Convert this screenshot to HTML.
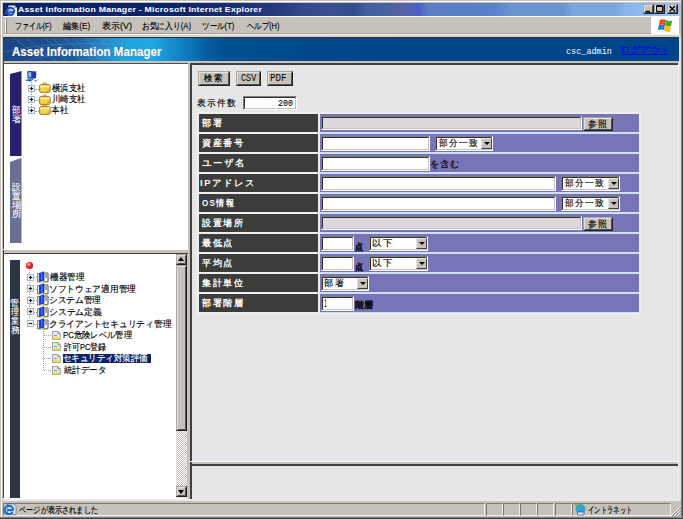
<!DOCTYPE html>
<html><head><meta charset="utf-8">
<style>
*{margin:0;padding:0;box-sizing:border-box}
html,body{width:683px;height:519px;overflow:hidden;background:#c6c2bb;font-family:"Liberation Sans",sans-serif;position:relative}
.a{position:absolute}
.t{position:absolute;white-space:nowrap;line-height:1}
.inp{position:absolute;background:#fff;border-top:1px solid #808080;border-left:1px solid #808080;border-bottom:1px solid #fff;border-right:1px solid #fff}
.inp:before{content:"";position:absolute;left:0;top:0;right:0;bottom:0;border-top:1px solid #303030;border-left:1px solid #303030;border-bottom:1px solid #c6c2bb;border-right:1px solid #c6c2bb}
.dis{background:#dcd8dc}
.btn{position:absolute;background:#c6c2bb;border-top:1px solid #a8a6a2;border-left:1px solid #a8a6a2;border-bottom:1px solid #202020;border-right:1px solid #202020}
.btn:before{content:"";position:absolute;left:0;top:0;right:0;bottom:0;border-top:1px solid #e4e2de;border-left:1px solid #e4e2de;border-bottom:1px solid #505050;border-right:1px solid #505050}
.dd{position:absolute;top:1px;bottom:1px;right:0px;width:11px;background:#c6c2bb;border-top:1px solid #e8e8e8;border-left:1px solid #e8e8e8;border-bottom:1px solid #404040;border-right:1px solid #404040}
.dd:after{content:"";position:absolute;left:1.5px;top:3px;border-left:3px solid transparent;border-right:3px solid transparent;border-top:3.5px solid #000}
.lbl{position:absolute;color:#fff;font-size:9px;font-weight:bold;letter-spacing:2px;white-space:nowrap;line-height:1}
.jt{font-size:9px;color:#000}
</style></head><body>

<div class="a" style="left:0;top:0;width:683px;height:1px;background:#c6c2bb"></div>
<div class="a" style="left:1px;top:1px;width:681px;height:1px;background:#fff"></div>
<div class="a" style="left:1px;top:1px;width:1px;height:517px;background:#fff"></div>
<div class="a" style="left:681px;top:0;width:1px;height:519px;background:#808080"></div>
<div class="a" style="left:682px;top:0;width:1px;height:519px;background:#404040"></div>
<div class="a" style="left:0;top:517px;width:683px;height:1px;background:#808080"></div>
<div class="a" style="left:0;top:518px;width:683px;height:1px;background:#404040"></div>
<div class="a" style="left:3px;top:3px;width:677px;height:13px;background:linear-gradient(90deg,#0a246a 0px,#0c2468 177px,#1a3072 230px,#223a7a 270px,#34488a 300px,#3a5090 330px,#304f8a 350px,#4060a0 365px,#4a62a0 385px,#5a62a0 400px,#4a60c8 416px,#5a7ec0 425px,#5a80c8 490px,#6a96d0 510px,#6a96d0 560px,#7aa6dc 570px,#7aa6dc 612px,#8ab4ea 622px,#a0c4f0 677px)"></div>
<svg class="a" style="left:2px;top:2px" width="16" height="15" viewBox="0 0 16 15">
<path d="M6.5 3.5 H12.8 L15 5.7 V14.5 H6.5z" fill="#f2f0ea"/>
<path d="M12.8 3.5 V5.7 H15" fill="#d0ccc0" stroke="#404040" stroke-width="0.5"/>
<path d="M5 9.5 A3.6 3.2 0 1 1 11.8 10.2 H7 M11.6 11.5 A3.6 3.2 0 0 1 5 9.5" fill="none" stroke="#1a4ad8" stroke-width="2"/>
<ellipse cx="8.8" cy="8" rx="1.6" ry="0.9" fill="#80c8f0"/>
<path d="M2.8 12.5 Q4.2 9 6 7.5" stroke="#8a6a28" stroke-width="0.9" fill="none"/>
</svg>
<div class="t" style="left:18.00px;top:6.00px;color:#fff;font-size:9px;font-weight:bold;letter-spacing:0.2px;transform:scale(0.9760,0.8889);transform-origin:0 0;">Asset Information Manager - Microsoft Internet Explorer</div>
<div class="btn" style="left:643px;top:4px;width:11px;height:10px"></div>
<div class="btn" style="left:654px;top:4px;width:11px;height:10px"></div>
<div class="btn" style="left:667px;top:4px;width:11px;height:10px"></div>
<svg class="a" style="left:643px;top:4px" width="36" height="10" viewBox="0 0 36 10">
<path d="M2.5 7.5 H7" stroke="#000" stroke-width="1.4"/>
<path d="M13.5 1.8 H19.5 V7.5 H13.5z" fill="none" stroke="#000" stroke-width="1"/>
<path d="M13.5 2 H19.5" stroke="#000" stroke-width="1.6"/>
<path d="M26.5 2 L32 7.5 M32 2 L26.5 7.5" stroke="#000" stroke-width="1.3"/>
</svg>
<div class="a" style="left:3px;top:16px;width:677px;height:1px;background:#fff"></div>
<div class="a" style="left:5px;top:19px;width:1px;height:14px;background:#fff"></div>
<div class="a" style="left:6px;top:19px;width:1px;height:14px;background:#808080"></div>
<div class="a" style="left:3px;top:33px;width:648px;height:1px;background:#a8a49c"></div>
<div class="a" style="left:3px;top:34px;width:677px;height:1px;background:#f4f2ee"></div>
<div class="t" style="left:15.23px;top:22.30px;color:#000;font-size:9px;-webkit-text-stroke:0.15px;transform:scale(0.7717,1.0000);transform-origin:0 0;"><span style="display:inline-block;width:9.000px;text-align:center">フ</span><span style="display:inline-block;width:9.000px;text-align:center">ァ</span><span style="display:inline-block;width:9.000px;text-align:center">イ</span><span style="display:inline-block;width:9.000px;text-align:center">ル</span>(F)</div>
<div class="t" style="left:63.40px;top:22.30px;color:#000;font-size:9px;-webkit-text-stroke:0.15px;transform:scale(0.9067,1.0000);transform-origin:0 0;"><span style="display:inline-block;width:9.000px;text-align:center">編</span><span style="display:inline-block;width:9.000px;text-align:center">集</span>(E)</div>
<div class="t" style="left:101.80px;top:22.30px;color:#000;font-size:9px;-webkit-text-stroke:0.15px;transform:scale(0.9966,1.0000);transform-origin:0 0;"><span style="display:inline-block;width:9.000px;text-align:center">表</span><span style="display:inline-block;width:9.000px;text-align:center">示</span>(V)</div>
<div class="t" style="left:141.94px;top:22.30px;color:#000;font-size:9px;-webkit-text-stroke:0.15px;transform:scale(0.8607,1.0000);transform-origin:0 0;"><span style="display:inline-block;width:9.000px;text-align:center">お</span><span style="display:inline-block;width:9.000px;text-align:center">気</span><span style="display:inline-block;width:9.000px;text-align:center">に</span><span style="display:inline-block;width:9.000px;text-align:center">入</span><span style="display:inline-block;width:9.000px;text-align:center">り</span>(A)</div>
<div class="t" style="left:202.16px;top:22.30px;color:#000;font-size:9px;-webkit-text-stroke:0.15px;transform:scale(0.8378,1.0000);transform-origin:0 0;"><span style="display:inline-block;width:9.000px;text-align:center">ツ</span><span style="display:inline-block;width:9.000px;text-align:center">ー</span><span style="display:inline-block;width:9.000px;text-align:center">ル</span>(T)</div>
<div class="t" style="left:246.60px;top:22.30px;color:#000;font-size:9px;-webkit-text-stroke:0.15px;transform:scale(0.8205,1.0000);transform-origin:0 0;"><span style="display:inline-block;width:9.000px;text-align:center">ヘ</span><span style="display:inline-block;width:9.000px;text-align:center">ル</span><span style="display:inline-block;width:9.000px;text-align:center">プ</span>(H)</div>
<div class="a" style="left:651px;top:17px;width:28px;height:17px;background:#fff"></div>
<svg class="a" style="left:657px;top:18px" width="16" height="15" viewBox="0 0 16 15">
<path d="M2.8 1.8 Q5.5 0.5 9 2 L8 7 Q5 5.8 1.8 7z" fill="#f05020"/>
<path d="M9 2 Q12 3.5 15.2 2.5 L14 8.3 Q11 9.3 8 7z" fill="#48a828"/>
<path d="M1.8 7 Q5 5.8 8 7 L7 12.3 Q4 11 0.8 12.2z" fill="#2a78d8"/>
<path d="M8 7 Q11 9.3 14 8.3 L13 13.8 Q10 14.8 7 12.3z" fill="#f8c018"/>
</svg>
<div class="a" style="left:3px;top:35px;width:677px;height:2px;background:#d8d4cc"></div>
<div class="a" style="left:3px;top:37px;width:677px;height:1px;background:#303030"></div>
<div class="a" style="left:3px;top:37px;width:1px;height:463px;background:#404040"></div>
<div class="a" style="left:679px;top:37px;width:2px;height:463px;background:#e4e2de"></div>
<div class="a" style="left:4px;top:38px;width:675px;height:22.5px;background:linear-gradient(90deg,#1a4686 0px,#1c4c8c 35px,#1e5c9c 70px,#2888c8 100px,#20a6e0 125px,#20a8e0 150px,#1890d0 165px,#0a70b4 190px,#045a9c 205px,#005090 220px,#004c8c 260px,#00468a 330px,#00448a 677px)"></div>
<svg class="a" style="left:4px;top:38px" width="180" height="23" viewBox="0 0 180 23">
<g stroke="#8ad0ff" stroke-width="0.6" fill="none" opacity="0.35">
<path d="M10 0 L40 23"/><path d="M22 0 L52 23"/><path d="M40 0 Q55 10 62 23"/>
<path d="M48 0 Q60 12 80 23"/><path d="M60 0 Q72 10 90 23"/><path d="M70 0 Q80 14 100 23"/>
<path d="M0 14 Q40 4 110 6"/><path d="M20 23 Q60 12 120 14"/>
<path d="M80 0 L110 23"/><path d="M95 0 L120 23"/>
</g>
</svg>
<div class="t" style="left:12.20px;top:45.94px;color:#fff;font-size:11.5px;font-weight:bold;-webkit-text-stroke:0.15px;transform:scale(1.0081,1.0600);transform-origin:0 0;text-shadow:0.6px 0.6px 0 rgba(0,0,40,0.45)">Asset Information Manager</div>
<div class="t" style="left:565.74px;top:46.70px;color:#fff;font-size:8px;font-family:'Liberation Mono',monospace;transform:scale(1.0619,1.2000);transform-origin:0 0;">csc_admin</div>
<div class="t" style="left:619.96px;top:45.85px;color:#0000ff;font-size:9px;-webkit-text-stroke:0.15px;transform:scale(1.1195,1.0000);transform-origin:0 0;"><span style="display:inline-block;width:9.000px;text-align:center">ロ</span><span style="display:inline-block;width:9.000px;text-align:center">グ</span><span style="display:inline-block;width:9.000px;text-align:center">ア</span><span style="display:inline-block;width:9.000px;text-align:center">ウ</span><span style="display:inline-block;width:9.000px;text-align:center">ト</span></div>
<div class="a" style="left:622px;top:54px;width:46px;height:1px;background:#0000ff"></div>
<div class="a" style="left:4px;top:60.5px;width:675px;height:1px;background:#f0eeea"></div>
<div class="a" style="left:4px;top:61px;width:675px;height:2px;background:#c6c2bb"></div>
<div class="a" style="left:4px;top:63px;width:184px;height:1px;background:#505050"></div>
<div class="a" style="left:4px;top:64px;width:184px;height:185px;background:#fff"></div>
<svg class="a" style="left:10px;top:70px" width="12" height="88" viewBox="0 0 12 88"><path d="M0 4 Q1 3.5 11.5 1 L11.5 86 L0 86 Z" fill="#2a2070"/></svg>
<div class="a" style="left:10px;top:157px;width:12px;height:1px;background:#fff"></div>
<svg class="a" style="left:10px;top:157px" width="12" height="87" viewBox="0 0 12 87"><path d="M0 5 Q1 4.5 11.5 1 L11.5 86 L0 86 Z" fill="#6a7090"/></svg>
<div class="t" style="left:11.50px;top:105.67px;color:#fff;font-size:8.5px;-webkit-text-stroke:0.1px;transform:scale(0.9444,1.0000);transform-origin:0 0;"><span style="display:inline-block;width:9.000px;text-align:center">部</span></div>
<div class="t" style="left:11.50px;top:115.02px;color:#fff;font-size:8.5px;-webkit-text-stroke:0.1px;transform:scale(1.0625,1.0000);transform-origin:0 0;"><span style="display:inline-block;width:9.000px;text-align:center">署</span></div>
<div class="t" style="left:11.50px;top:182.53px;color:#fff;font-size:8.5px;-webkit-text-stroke:0.1px;transform:scale(0.9444,1.0000);transform-origin:0 0;"><span style="display:inline-block;width:9.000px;text-align:center">設</span></div>
<div class="t" style="left:11.50px;top:191.78px;color:#fff;font-size:8.5px;-webkit-text-stroke:0.1px;transform:scale(0.9444,1.0000);transform-origin:0 0;"><span style="display:inline-block;width:9.000px;text-align:center">置</span></div>
<div class="t" style="left:11.50px;top:201.03px;color:#fff;font-size:8.5px;-webkit-text-stroke:0.1px;transform:scale(1.0625,1.0000);transform-origin:0 0;"><span style="display:inline-block;width:9.000px;text-align:center">場</span></div>
<div class="t" style="left:11.50px;top:210.28px;color:#fff;font-size:8.5px;-webkit-text-stroke:0.1px;transform:scale(1.0625,1.0000);transform-origin:0 0;"><span style="display:inline-block;width:9.000px;text-align:center">所</span></div>
<svg class="a" style="left:24px;top:70px" width="14" height="13" viewBox="0 0 14 13">
<path d="M3.2 1.2 Q7 0.6 12.3 1.5 L12 8.3 Q8 8.8 3.6 8.3z" fill="#1a3aa8"/>
<path d="M4.3 2.2 L7.3 2.3 L7.2 7.3 L4.6 7.2z" fill="#88c8f0"/>
<path d="M1 10.5 L5.5 8.2 L10 9 L6.5 11.5z" fill="#2050c0"/>
<path d="M2 10.2 L5.5 9 L8 9.5" stroke="#88b8f0" stroke-width="0.6" fill="none"/>
<path d="M10.5 11 L12.8 10.5" stroke="#3a60c0" stroke-width="1"/>
</svg>
<div class="a" style="left:31px;top:82px;width:1px;height:29px;border-left:1px dotted #a0a0a0"></div>
<div class="a" style="left:35px;top:88.5px;width:4px;height:1px;border-top:1px dotted #a0a0a0"></div>
<svg class="a" style="left:28px;top:85px" width="7" height="7" viewBox="0 0 7 7">
<rect x="0.5" y="0.5" width="6" height="6" fill="#f4f4f4" stroke="#98b0d0" stroke-width="0.9"/>
<path d="M1.8 3.5 H5.2" stroke="#101010" stroke-width="1.1"/><path d="M3.5 1.8 V5.2" stroke="#101010" stroke-width="1.1"/>
</svg>
<svg class="a" style="left:38.5px;top:82px" width="12" height="11" viewBox="0 0 12 11">
<path d="M3.5 3 Q3.5 0.8 5.8 0.8 Q8 0.8 8 3" fill="none" stroke="#b07820" stroke-width="1"/>
<rect x="0.6" y="2.6" width="10.6" height="7.8" rx="1.5" fill="#f8d040" stroke="#a06a18" stroke-width="0.9"/>
<path d="M1.3 3.4 H10.5 V5.5 H1.3z" fill="#fff0a0"/>
<path d="M8 8.5 L10.5 6.5 V9.5 H8z" fill="#f0a040"/>
</svg>
<div class="t" style="left:51.80px;top:84.45px;color:#000;font-size:8.5px;-webkit-text-stroke:0.15px;transform:scale(0.9417,1.0000);transform-origin:0 0;"><span style="display:inline-block;width:9.000px;text-align:center">横</span><span style="display:inline-block;width:9.000px;text-align:center">浜</span><span style="display:inline-block;width:9.000px;text-align:center">支</span><span style="display:inline-block;width:9.000px;text-align:center">社</span></div>
<div class="a" style="left:35px;top:99.5px;width:4px;height:1px;border-top:1px dotted #a0a0a0"></div>
<svg class="a" style="left:28px;top:96px" width="7" height="7" viewBox="0 0 7 7">
<rect x="0.5" y="0.5" width="6" height="6" fill="#f4f4f4" stroke="#98b0d0" stroke-width="0.9"/>
<path d="M1.8 3.5 H5.2" stroke="#101010" stroke-width="1.1"/><path d="M3.5 1.8 V5.2" stroke="#101010" stroke-width="1.1"/>
</svg>
<svg class="a" style="left:38.5px;top:94px" width="12" height="11" viewBox="0 0 12 11">
<path d="M3.5 3 Q3.5 0.8 5.8 0.8 Q8 0.8 8 3" fill="none" stroke="#b07820" stroke-width="1"/>
<rect x="0.6" y="2.6" width="10.6" height="7.8" rx="1.5" fill="#f8d040" stroke="#a06a18" stroke-width="0.9"/>
<path d="M1.3 3.4 H10.5 V5.5 H1.3z" fill="#fff0a0"/>
<path d="M8 8.5 L10.5 6.5 V9.5 H8z" fill="#f0a040"/>
</svg>
<div class="t" style="left:51.80px;top:95.45px;color:#000;font-size:8.5px;-webkit-text-stroke:0.15px;transform:scale(0.9417,1.0000);transform-origin:0 0;"><span style="display:inline-block;width:9.000px;text-align:center">川</span><span style="display:inline-block;width:9.000px;text-align:center">崎</span><span style="display:inline-block;width:9.000px;text-align:center">支</span><span style="display:inline-block;width:9.000px;text-align:center">社</span></div>
<div class="a" style="left:35px;top:110.5px;width:4px;height:1px;border-top:1px dotted #a0a0a0"></div>
<svg class="a" style="left:28px;top:107px" width="7" height="7" viewBox="0 0 7 7">
<rect x="0.5" y="0.5" width="6" height="6" fill="#f4f4f4" stroke="#98b0d0" stroke-width="0.9"/>
<path d="M1.8 3.5 H5.2" stroke="#101010" stroke-width="1.1"/><path d="M3.5 1.8 V5.2" stroke="#101010" stroke-width="1.1"/>
</svg>
<svg class="a" style="left:38.5px;top:104px" width="12" height="11" viewBox="0 0 12 11">
<path d="M3.5 3 Q3.5 0.8 5.8 0.8 Q8 0.8 8 3" fill="none" stroke="#b07820" stroke-width="1"/>
<rect x="0.6" y="2.6" width="10.6" height="7.8" rx="1.5" fill="#f8d040" stroke="#a06a18" stroke-width="0.9"/>
<path d="M1.3 3.4 H10.5 V5.5 H1.3z" fill="#fff0a0"/>
<path d="M8 8.5 L10.5 6.5 V9.5 H8z" fill="#f0a040"/>
</svg>
<div class="t" style="left:50.83px;top:106.45px;color:#000;font-size:8.5px;-webkit-text-stroke:0.15px;transform:scale(0.9706,1.0000);transform-origin:0 0;"><span style="display:inline-block;width:9.000px;text-align:center">本</span><span style="display:inline-block;width:9.000px;text-align:center">社</span></div>
<div class="a" style="left:3px;top:249px;width:186px;height:1px;background:#fff"></div>
<div class="a" style="left:3px;top:253px;width:186px;height:1px;background:#404040"></div>
<div class="a" style="left:3px;top:253px;width:1px;height:246px;background:#404040"></div>
<div class="a" style="left:4px;top:254px;width:172px;height:244px;background:#fff"></div>
<div class="a" style="left:10px;top:260px;width:10px;height:238px;background:#2c3648"></div>
<div class="t" style="left:10.30px;top:298.80px;color:#fff;font-size:8.5px;-webkit-text-stroke:0.1px;transform:scale(1.0000,1.0000);transform-origin:0 0;"><span style="display:inline-block;width:9.000px;text-align:center">管</span></div>
<div class="t" style="left:11.30px;top:308.00px;color:#fff;font-size:8.5px;-webkit-text-stroke:0.1px;transform:scale(0.8889,1.0000);transform-origin:0 0;"><span style="display:inline-block;width:9.000px;text-align:center">理</span></div>
<div class="t" style="left:11.30px;top:317.20px;color:#fff;font-size:8.5px;-webkit-text-stroke:0.1px;transform:scale(0.8889,1.0000);transform-origin:0 0;"><span style="display:inline-block;width:9.000px;text-align:center">業</span></div>
<div class="t" style="left:11.30px;top:326.40px;color:#fff;font-size:8.5px;-webkit-text-stroke:0.1px;transform:scale(1.0000,1.0000);transform-origin:0 0;"><span style="display:inline-block;width:9.000px;text-align:center">務</span></div>
<div class="a" style="left:176px;top:254px;width:11px;height:244px;background:repeating-conic-gradient(#c6c2bb 0 25%,#fff 0 50%) 0 0/2px 2px"></div>
<div class="btn" style="left:176px;top:254px;width:11px;height:11px"></div>
<div class="a" style="left:178px;top:257px;border-left:3.5px solid transparent;border-right:3.5px solid transparent;border-bottom:4px solid #000"></div>
<div class="btn" style="left:176px;top:265px;width:11px;height:166px"></div>
<div class="btn" style="left:176px;top:486px;width:11px;height:11px"></div>
<div class="a" style="left:178px;top:490px;border-left:3.5px solid transparent;border-right:3.5px solid transparent;border-top:4px solid #000"></div>
<div class="a" style="left:187px;top:254px;width:1px;height:245px;background:#c6c2bb"></div>
<div class="a" style="left:26.3px;top:262.3px;width:7.2px;height:6.8px;border-radius:50%;background:radial-gradient(circle at 40% 35%,#ffb0b0 0,#e02020 45%,#a01010 100%)"></div>
<div class="a" style="left:29px;top:270px;width:1px;height:53px;border-left:1px dotted #a0a0a0"></div>
<div class="a" style="left:33px;top:277.2px;width:4px;height:1px;border-top:1px dotted #a0a0a0"></div>
<svg class="a" style="left:26.5px;top:274px" width="7" height="7" viewBox="0 0 7 7">
<rect x="0.5" y="0.5" width="6" height="6" fill="#f4f4f4" stroke="#98b0d0" stroke-width="0.9"/>
<path d="M1.8 3.5 H5.2" stroke="#101010" stroke-width="1.1"/><path d="M3.5 1.8 V5.2" stroke="#101010" stroke-width="1.1"/>
</svg>
<svg class="a" style="left:37px;top:271px" width="12" height="12" viewBox="0 0 12 12">
<path d="M0.6 2.5 H2.5 V11 H0.6z" fill="#e8e8e8" stroke="#303030" stroke-width="0.6"/>
<path d="M7 2 H11 V10.6 H7z" fill="#fff" stroke="#202020" stroke-width="0.7"/>
<path d="M11 2.5 V10.5" stroke="#7080ff" stroke-width="0.8"/>
<path d="M8 4 H10 M8 6 H10" stroke="#202020" stroke-width="0.8"/>
<path d="M2.2 2 L7 0.3 V9.6 L2.2 11.2z" fill="#1038e8"/>
<path d="M4.8 1.8 V9" stroke="#58c8ff" stroke-width="0.7"/>
<path d="M2.8 11 H10.8" stroke="#b8a818" stroke-width="0.9"/>
</svg>
<div class="t" style="left:50.05px;top:273.20px;color:#000;font-size:8.5px;-webkit-text-stroke:0.15px;transform:scale(0.9542,1.0000);transform-origin:0 0;"><span style="display:inline-block;width:9.000px;text-align:center">機</span><span style="display:inline-block;width:9.000px;text-align:center">器</span><span style="display:inline-block;width:9.000px;text-align:center">管</span><span style="display:inline-block;width:9.000px;text-align:center">理</span></div>
<div class="a" style="left:33px;top:288.8px;width:4px;height:1px;border-top:1px dotted #a0a0a0"></div>
<svg class="a" style="left:26.5px;top:285px" width="7" height="7" viewBox="0 0 7 7">
<rect x="0.5" y="0.5" width="6" height="6" fill="#f4f4f4" stroke="#98b0d0" stroke-width="0.9"/>
<path d="M1.8 3.5 H5.2" stroke="#101010" stroke-width="1.1"/><path d="M3.5 1.8 V5.2" stroke="#101010" stroke-width="1.1"/>
</svg>
<svg class="a" style="left:37px;top:283px" width="12" height="12" viewBox="0 0 12 12">
<path d="M0.6 2.5 H2.5 V11 H0.6z" fill="#e8e8e8" stroke="#303030" stroke-width="0.6"/>
<path d="M7 2 H11 V10.6 H7z" fill="#fff" stroke="#202020" stroke-width="0.7"/>
<path d="M11 2.5 V10.5" stroke="#7080ff" stroke-width="0.8"/>
<path d="M8 4 H10 M8 6 H10" stroke="#202020" stroke-width="0.8"/>
<path d="M2.2 2 L7 0.3 V9.6 L2.2 11.2z" fill="#1038e8"/>
<path d="M4.8 1.8 V9" stroke="#58c8ff" stroke-width="0.7"/>
<path d="M2.8 11 H10.8" stroke="#b8a818" stroke-width="0.9"/>
</svg>
<div class="t" style="left:49.08px;top:284.80px;color:#000;font-size:8.5px;-webkit-text-stroke:0.15px;transform:scale(0.9657,1.0000);transform-origin:0 0;"><span style="display:inline-block;width:9.000px;text-align:center">ソ</span><span style="display:inline-block;width:9.000px;text-align:center">フ</span><span style="display:inline-block;width:9.000px;text-align:center">ト</span><span style="display:inline-block;width:9.000px;text-align:center">ウ</span><span style="display:inline-block;width:9.000px;text-align:center">ェ</span><span style="display:inline-block;width:9.000px;text-align:center">ア</span><span style="display:inline-block;width:9.000px;text-align:center">適</span><span style="display:inline-block;width:9.000px;text-align:center">用</span><span style="display:inline-block;width:9.000px;text-align:center">管</span><span style="display:inline-block;width:9.000px;text-align:center">理</span></div>
<div class="a" style="left:33px;top:300.4px;width:4px;height:1px;border-top:1px dotted #a0a0a0"></div>
<svg class="a" style="left:26.5px;top:297px" width="7" height="7" viewBox="0 0 7 7">
<rect x="0.5" y="0.5" width="6" height="6" fill="#f4f4f4" stroke="#98b0d0" stroke-width="0.9"/>
<path d="M1.8 3.5 H5.2" stroke="#101010" stroke-width="1.1"/><path d="M3.5 1.8 V5.2" stroke="#101010" stroke-width="1.1"/>
</svg>
<svg class="a" style="left:37px;top:294px" width="12" height="12" viewBox="0 0 12 12">
<path d="M0.6 2.5 H2.5 V11 H0.6z" fill="#e8e8e8" stroke="#303030" stroke-width="0.6"/>
<path d="M7 2 H11 V10.6 H7z" fill="#fff" stroke="#202020" stroke-width="0.7"/>
<path d="M11 2.5 V10.5" stroke="#7080ff" stroke-width="0.8"/>
<path d="M8 4 H10 M8 6 H10" stroke="#202020" stroke-width="0.8"/>
<path d="M2.2 2 L7 0.3 V9.6 L2.2 11.2z" fill="#1038e8"/>
<path d="M4.8 1.8 V9" stroke="#58c8ff" stroke-width="0.7"/>
<path d="M2.8 11 H10.8" stroke="#b8a818" stroke-width="0.9"/>
</svg>
<div class="t" style="left:49.08px;top:296.40px;color:#000;font-size:8.5px;-webkit-text-stroke:0.15px;transform:scale(0.9651,1.0000);transform-origin:0 0;"><span style="display:inline-block;width:9.000px;text-align:center">シ</span><span style="display:inline-block;width:9.000px;text-align:center">ス</span><span style="display:inline-block;width:9.000px;text-align:center">テ</span><span style="display:inline-block;width:9.000px;text-align:center">ム</span><span style="display:inline-block;width:9.000px;text-align:center">管</span><span style="display:inline-block;width:9.000px;text-align:center">理</span></div>
<div class="a" style="left:33px;top:312.0px;width:4px;height:1px;border-top:1px dotted #a0a0a0"></div>
<svg class="a" style="left:26.5px;top:308px" width="7" height="7" viewBox="0 0 7 7">
<rect x="0.5" y="0.5" width="6" height="6" fill="#f4f4f4" stroke="#98b0d0" stroke-width="0.9"/>
<path d="M1.8 3.5 H5.2" stroke="#101010" stroke-width="1.1"/><path d="M3.5 1.8 V5.2" stroke="#101010" stroke-width="1.1"/>
</svg>
<svg class="a" style="left:37px;top:306px" width="12" height="12" viewBox="0 0 12 12">
<path d="M0.6 2.5 H2.5 V11 H0.6z" fill="#e8e8e8" stroke="#303030" stroke-width="0.6"/>
<path d="M7 2 H11 V10.6 H7z" fill="#fff" stroke="#202020" stroke-width="0.7"/>
<path d="M11 2.5 V10.5" stroke="#7080ff" stroke-width="0.8"/>
<path d="M8 4 H10 M8 6 H10" stroke="#202020" stroke-width="0.8"/>
<path d="M2.2 2 L7 0.3 V9.6 L2.2 11.2z" fill="#1038e8"/>
<path d="M4.8 1.8 V9" stroke="#58c8ff" stroke-width="0.7"/>
<path d="M2.8 11 H10.8" stroke="#b8a818" stroke-width="0.9"/>
</svg>
<div class="t" style="left:49.07px;top:308.00px;color:#000;font-size:8.5px;-webkit-text-stroke:0.15px;transform:scale(0.9802,1.0000);transform-origin:0 0;"><span style="display:inline-block;width:9.000px;text-align:center">シ</span><span style="display:inline-block;width:9.000px;text-align:center">ス</span><span style="display:inline-block;width:9.000px;text-align:center">テ</span><span style="display:inline-block;width:9.000px;text-align:center">ム</span><span style="display:inline-block;width:9.000px;text-align:center">定</span><span style="display:inline-block;width:9.000px;text-align:center">義</span></div>
<div class="a" style="left:33px;top:323.6px;width:4px;height:1px;border-top:1px dotted #a0a0a0"></div>
<svg class="a" style="left:26.5px;top:320px" width="7" height="7" viewBox="0 0 7 7">
<rect x="0.5" y="0.5" width="6" height="6" fill="#f4f4f4" stroke="#98b0d0" stroke-width="0.9"/>
<path d="M1.8 3.5 H5.2" stroke="#101010" stroke-width="1.1"/>
</svg>
<svg class="a" style="left:37px;top:318px" width="12" height="12" viewBox="0 0 12 12">
<path d="M0.6 2.5 H2.5 V11 H0.6z" fill="#e8e8e8" stroke="#303030" stroke-width="0.6"/>
<path d="M7 2 H11 V10.6 H7z" fill="#fff" stroke="#202020" stroke-width="0.7"/>
<path d="M11 2.5 V10.5" stroke="#7080ff" stroke-width="0.8"/>
<path d="M8 4 H10 M8 6 H10" stroke="#202020" stroke-width="0.8"/>
<path d="M2.2 2 L7 0.3 V9.6 L2.2 11.2z" fill="#1038e8"/>
<path d="M4.8 1.8 V9" stroke="#58c8ff" stroke-width="0.7"/>
<path d="M2.8 11 H10.8" stroke="#b8a818" stroke-width="0.9"/>
</svg>
<div class="t" style="left:49.08px;top:319.60px;color:#000;font-size:8.5px;-webkit-text-stroke:0.15px;transform:scale(0.9708,1.0000);transform-origin:0 0;"><span style="display:inline-block;width:9.000px;text-align:center">ク</span><span style="display:inline-block;width:9.000px;text-align:center">ラ</span><span style="display:inline-block;width:9.000px;text-align:center">イ</span><span style="display:inline-block;width:9.000px;text-align:center">ア</span><span style="display:inline-block;width:9.000px;text-align:center">ン</span><span style="display:inline-block;width:9.000px;text-align:center">ト</span><span style="display:inline-block;width:9.000px;text-align:center">セ</span><span style="display:inline-block;width:9.000px;text-align:center">キ</span><span style="display:inline-block;width:9.000px;text-align:center">ュ</span><span style="display:inline-block;width:9.000px;text-align:center">リ</span><span style="display:inline-block;width:9.000px;text-align:center">テ</span><span style="display:inline-block;width:9.000px;text-align:center">ィ</span><span style="display:inline-block;width:9.000px;text-align:center">管</span><span style="display:inline-block;width:9.000px;text-align:center">理</span></div>
<div class="a" style="left:43px;top:329px;width:1px;height:41px;border-left:1px dotted #a0a0a0"></div>
<div class="a" style="left:44px;top:335.2px;width:7px;height:1px;border-top:1px dotted #a0a0a0"></div>
<svg class="a" style="left:52px;top:331px" width="9" height="9" viewBox="0 0 9 9">
<path d="M0.5 0.5 H6 L8.3 2.8 V8.5 H0.5z" fill="#dce8f0" stroke="#808080" stroke-width="0.7"/>
<path d="M6 0.5 V2.8 H8.3" fill="#c0c0c0" stroke="#606060" stroke-width="0.5"/>
<path d="M1 6 H8 V8.2 H1z" fill="#f0e040"/>
<path d="M2 4.5 H5" stroke="#606060" stroke-width="0.6"/>
</svg>
<div class="t" style="left:63.28px;top:331.20px;color:#000;font-size:8.5px;-webkit-text-stroke:0.15px;transform:scale(0.9203,1.0000);transform-origin:0 0;">PC<span style="display:inline-block;width:9.000px;text-align:center">危</span><span style="display:inline-block;width:9.000px;text-align:center">険</span><span style="display:inline-block;width:9.000px;text-align:center">レ</span><span style="display:inline-block;width:9.000px;text-align:center">ベ</span><span style="display:inline-block;width:9.000px;text-align:center">ル</span><span style="display:inline-block;width:9.000px;text-align:center">管</span><span style="display:inline-block;width:9.000px;text-align:center">理</span></div>
<div class="a" style="left:44px;top:346.8px;width:7px;height:1px;border-top:1px dotted #a0a0a0"></div>
<svg class="a" style="left:52px;top:342px" width="9" height="9" viewBox="0 0 9 9">
<path d="M0.5 0.5 H6 L8.3 2.8 V8.5 H0.5z" fill="#dce8f0" stroke="#808080" stroke-width="0.7"/>
<path d="M6 0.5 V2.8 H8.3" fill="#c0c0c0" stroke="#606060" stroke-width="0.5"/>
<path d="M1 6 H8 V8.2 H1z" fill="#f0e040"/>
<path d="M2 4.5 H5" stroke="#606060" stroke-width="0.6"/>
</svg>
<div class="t" style="left:64.20px;top:342.80px;color:#000;font-size:8.5px;-webkit-text-stroke:0.15px;transform:scale(0.8854,1.0000);transform-origin:0 0;"><span style="display:inline-block;width:9.000px;text-align:center">許</span><span style="display:inline-block;width:9.000px;text-align:center">可</span>PC<span style="display:inline-block;width:9.000px;text-align:center">登</span><span style="display:inline-block;width:9.000px;text-align:center">録</span></div>
<div class="a" style="left:44px;top:358.4px;width:7px;height:1px;border-top:1px dotted #a0a0a0"></div>
<svg class="a" style="left:52px;top:354px" width="9" height="9" viewBox="0 0 9 9">
<path d="M0.5 0.5 H6 L8.3 2.8 V8.5 H0.5z" fill="#dce8f0" stroke="#808080" stroke-width="0.7"/>
<path d="M6 0.5 V2.8 H8.3" fill="#c0c0c0" stroke="#606060" stroke-width="0.5"/>
<path d="M1 6 H8 V8.2 H1z" fill="#f0e040"/>
<path d="M2 4.5 H5" stroke="#606060" stroke-width="0.6"/>
</svg>
<div class="a" style="left:63px;top:353.6px;width:88px;height:9.5px;background:#0a246a"></div>
<div class="t" style="left:63.26px;top:354.40px;color:#fff;font-size:8.5px;-webkit-text-stroke:0.15px;transform:scale(0.9416,1.0000);transform-origin:0 0;"><span style="display:inline-block;width:9.000px;text-align:center">セ</span><span style="display:inline-block;width:9.000px;text-align:center">キ</span><span style="display:inline-block;width:9.000px;text-align:center">ュ</span><span style="display:inline-block;width:9.000px;text-align:center">リ</span><span style="display:inline-block;width:9.000px;text-align:center">テ</span><span style="display:inline-block;width:9.000px;text-align:center">ィ</span><span style="display:inline-block;width:9.000px;text-align:center">対</span><span style="display:inline-block;width:9.000px;text-align:center">策</span><span style="display:inline-block;width:9.000px;text-align:center">評</span><span style="display:inline-block;width:9.000px;text-align:center">価</span></div>
<div class="a" style="left:44px;top:370.0px;width:7px;height:1px;border-top:1px dotted #a0a0a0"></div>
<svg class="a" style="left:52px;top:366px" width="9" height="9" viewBox="0 0 9 9">
<path d="M0.5 0.5 H6 L8.3 2.8 V8.5 H0.5z" fill="#dce8f0" stroke="#808080" stroke-width="0.7"/>
<path d="M6 0.5 V2.8 H8.3" fill="#c0c0c0" stroke="#606060" stroke-width="0.5"/>
<path d="M1 6 H8 V8.2 H1z" fill="#f0e040"/>
<path d="M2 4.5 H5" stroke="#606060" stroke-width="0.6"/>
</svg>
<div class="t" style="left:64.20px;top:366.00px;color:#000;font-size:8.5px;-webkit-text-stroke:0.15px;transform:scale(0.9432,1.0000);transform-origin:0 0;"><span style="display:inline-block;width:9.000px;text-align:center">統</span><span style="display:inline-block;width:9.000px;text-align:center">計</span><span style="display:inline-block;width:9.000px;text-align:center">デ</span><span style="display:inline-block;width:9.000px;text-align:center">ー</span><span style="display:inline-block;width:9.000px;text-align:center">タ</span></div>
<div class="a" style="left:3px;top:498px;width:186px;height:1px;background:#fff"></div>
<div class="a" style="left:188px;top:63px;width:2px;height:437px;background:#c6c2bb"></div>
<div class="a" style="left:190px;top:63px;width:2px;height:436px;background:#404040"></div>
<div class="a" style="left:190px;top:63px;width:488px;height:2px;background:#404040"></div>
<div class="a" style="left:192px;top:65px;width:486px;height:396px;background:#e6e6e6"></div>
<div class="a" style="left:190px;top:461px;width:488px;height:1px;background:#fff"></div>
<div class="a" style="left:190px;top:464px;width:488px;height:2px;background:#404040"></div>
<div class="a" style="left:192px;top:466px;width:486px;height:33px;background:#e6e6e6"></div>
<div class="a" style="left:678px;top:63px;width:1px;height:436px;background:#f0f0f0"></div>
<div class="a" style="left:190px;top:499px;width:490px;height:1px;background:#fff"></div>
<div class="btn" style="left:198px;top:71px;width:32px;height:15px"></div>
<div class="t" style="left:203.70px;top:73.65px;color:#000;font-size:9px;letter-spacing:2px;-webkit-text-stroke:0.2px;transform:scale(0.9250,1.0000);transform-origin:0 0;"><span style="display:inline-block;width:11.000px;text-align:center">検</span><span style="display:inline-block;width:11.000px;text-align:center">索</span></div>
<div class="btn" style="left:236px;top:71px;width:25px;height:15px"></div>
<div class="t" style="left:240.60px;top:73.70px;color:#000;font-size:9px;font-family:'Liberation Mono',monospace;;transform:scale(0.9437,1.1833);transform-origin:0 0;">CSV</div>
<div class="btn" style="left:267px;top:71px;width:26px;height:15px"></div>
<div class="t" style="left:270.28px;top:73.70px;color:#000;font-size:9px;font-family:'Liberation Mono',monospace;;transform:scale(1.0200,1.1833);transform-origin:0 0;">PDF</div>
<div class="t" style="left:197.03px;top:99.45px;color:#000;font-size:9px;letter-spacing:1.5px;-webkit-text-stroke:0.15px;transform:scale(0.9675,1.0000);transform-origin:0 0;"><span style="display:inline-block;width:10.500px;text-align:center">表</span><span style="display:inline-block;width:10.500px;text-align:center">示</span><span style="display:inline-block;width:10.500px;text-align:center">件</span><span style="display:inline-block;width:10.500px;text-align:center">数</span></div>
<div class="inp" style="left:243px;top:96px;width:54px;height:14px"></div>
<div class="t" style="left:278.43px;top:99.80px;color:#000;font-size:8.5px;font-family:'Liberation Mono',monospace;-webkit-text-stroke:0.1px;transform:scale(0.9714,1.0000);transform-origin:0 0;">200</div>
<div class="a" style="left:197px;top:112px;width:444px;height:203px;background:#eeeeee"></div>
<div class="a" style="left:320px;top:114px;width:319px;height:199px;background:#d0e0f4"></div>
<div class="a" style="left:199px;top:114px;width:119px;height:18px;background:#3c3c3a"></div>
<div class="a" style="left:320px;top:114px;width:319px;height:18px;background:#7874b8"></div>
<div class="t" style="left:201.50px;top:119.30px;color:#fff;font-size:9px;font-weight:bold;letter-spacing:1.5px;transform:scale(1.0250,1.0000);transform-origin:0 0;"><span style="display:inline-block;width:10.500px;text-align:center">部</span><span style="display:inline-block;width:10.500px;text-align:center">署</span></div>
<div class="a" style="left:199px;top:134px;width:119px;height:18px;background:#3c3c3a"></div>
<div class="a" style="left:320px;top:134px;width:319px;height:18px;background:#7874b8"></div>
<div class="t" style="left:201.50px;top:139.30px;color:#fff;font-size:9px;font-weight:bold;letter-spacing:1.5px;transform:scale(1.0171,1.0000);transform-origin:0 0;"><span style="display:inline-block;width:10.500px;text-align:center">資</span><span style="display:inline-block;width:10.500px;text-align:center">産</span><span style="display:inline-block;width:10.500px;text-align:center">番</span><span style="display:inline-block;width:10.500px;text-align:center">号</span></div>
<div class="a" style="left:199px;top:154px;width:119px;height:18px;background:#3c3c3a"></div>
<div class="a" style="left:320px;top:154px;width:319px;height:18px;background:#7874b8"></div>
<div class="t" style="left:201.50px;top:159.30px;color:#fff;font-size:9px;font-weight:bold;letter-spacing:1.5px;transform:scale(1.0375,1.0000);transform-origin:0 0;"><span style="display:inline-block;width:10.500px;text-align:center">ユ</span><span style="display:inline-block;width:10.500px;text-align:center">ー</span><span style="display:inline-block;width:10.500px;text-align:center">ザ</span><span style="display:inline-block;width:10.500px;text-align:center">名</span></div>
<div class="a" style="left:199px;top:174px;width:119px;height:18px;background:#3c3c3a"></div>
<div class="a" style="left:320px;top:174px;width:319px;height:18px;background:#7874b8"></div>
<div class="t" style="left:200.45px;top:179.30px;color:#fff;font-size:9px;font-weight:bold;letter-spacing:1.5px;transform:scale(1.0460,1.0000);transform-origin:0 0;">IP<span style="display:inline-block;width:10.500px;text-align:center">ア</span><span style="display:inline-block;width:10.500px;text-align:center">ド</span><span style="display:inline-block;width:10.500px;text-align:center">レ</span><span style="display:inline-block;width:10.500px;text-align:center">ス</span></div>
<div class="a" style="left:199px;top:194px;width:119px;height:18px;background:#3c3c3a"></div>
<div class="a" style="left:320px;top:194px;width:319px;height:18px;background:#7874b8"></div>
<div class="t" style="left:201.50px;top:199.30px;color:#fff;font-size:9px;font-weight:bold;letter-spacing:1.5px;transform:scale(0.8917,1.0000);transform-origin:0 0;">OS<span style="display:inline-block;width:10.500px;text-align:center">情</span><span style="display:inline-block;width:10.500px;text-align:center">報</span></div>
<div class="a" style="left:199px;top:214px;width:119px;height:18px;background:#3c3c3a"></div>
<div class="a" style="left:320px;top:214px;width:319px;height:18px;background:#7874b8"></div>
<div class="t" style="left:201.50px;top:219.30px;color:#fff;font-size:9px;font-weight:bold;letter-spacing:1.5px;transform:scale(1.0024,1.0000);transform-origin:0 0;"><span style="display:inline-block;width:10.500px;text-align:center">設</span><span style="display:inline-block;width:10.500px;text-align:center">置</span><span style="display:inline-block;width:10.500px;text-align:center">場</span><span style="display:inline-block;width:10.500px;text-align:center">所</span></div>
<div class="a" style="left:199px;top:234px;width:119px;height:18px;background:#3c3c3a"></div>
<div class="a" style="left:320px;top:234px;width:319px;height:18px;background:#7874b8"></div>
<div class="t" style="left:201.50px;top:239.30px;color:#fff;font-size:9px;font-weight:bold;letter-spacing:1.5px;transform:scale(1.0167,1.0000);transform-origin:0 0;"><span style="display:inline-block;width:10.500px;text-align:center">最</span><span style="display:inline-block;width:10.500px;text-align:center">低</span><span style="display:inline-block;width:10.500px;text-align:center">点</span></div>
<div class="a" style="left:199px;top:254px;width:119px;height:18px;background:#3c3c3a"></div>
<div class="a" style="left:320px;top:254px;width:319px;height:18px;background:#7874b8"></div>
<div class="t" style="left:201.50px;top:259.30px;color:#fff;font-size:9px;font-weight:bold;letter-spacing:1.5px;transform:scale(1.0167,1.0000);transform-origin:0 0;"><span style="display:inline-block;width:10.500px;text-align:center">平</span><span style="display:inline-block;width:10.500px;text-align:center">均</span><span style="display:inline-block;width:10.500px;text-align:center">点</span></div>
<div class="a" style="left:199px;top:274px;width:119px;height:18px;background:#3c3c3a"></div>
<div class="a" style="left:320px;top:274px;width:319px;height:18px;background:#7874b8"></div>
<div class="t" style="left:201.50px;top:279.30px;color:#fff;font-size:9px;font-weight:bold;letter-spacing:1.5px;transform:scale(1.0122,1.0000);transform-origin:0 0;"><span style="display:inline-block;width:10.500px;text-align:center">集</span><span style="display:inline-block;width:10.500px;text-align:center">計</span><span style="display:inline-block;width:10.500px;text-align:center">単</span><span style="display:inline-block;width:10.500px;text-align:center">位</span></div>
<div class="a" style="left:199px;top:294px;width:119px;height:18px;background:#3c3c3a"></div>
<div class="a" style="left:320px;top:294px;width:319px;height:18px;background:#7874b8"></div>
<div class="t" style="left:201.50px;top:299.30px;color:#fff;font-size:9px;font-weight:bold;letter-spacing:1.5px;transform:scale(1.0122,1.0000);transform-origin:0 0;"><span style="display:inline-block;width:10.500px;text-align:center">部</span><span style="display:inline-block;width:10.500px;text-align:center">署</span><span style="display:inline-block;width:10.500px;text-align:center">階</span><span style="display:inline-block;width:10.500px;text-align:center">層</span></div>
<div class="inp dis" style="left:321px;top:116px;width:261px;height:14px"></div>
<div class="btn" style="left:583px;top:116.5px;width:30px;height:14px"></div>
<div class="t" style="left:588.10px;top:119.70px;color:#000;font-size:8.5px;letter-spacing:1px;-webkit-text-stroke:0.15px;transform:scale(0.9842,1.0000);transform-origin:0 0;"><span style="display:inline-block;width:10.000px;text-align:center">参</span><span style="display:inline-block;width:10.000px;text-align:center">照</span></div>
<div class="inp" style="left:321px;top:136px;width:109px;height:14.5px"></div>
<div class="inp" style="left:435px;top:136px;width:58px;height:14.5px"><div class="dd"></div></div>
<div class="t" style="left:438.70px;top:139.20px;color:#000;font-size:8.5px;letter-spacing:1.5px;-webkit-text-stroke:0.15px;transform:scale(0.9585,1.0000);transform-origin:0 0;"><span style="display:inline-block;width:10.500px;text-align:center">部</span><span style="display:inline-block;width:10.500px;text-align:center">分</span><span style="display:inline-block;width:10.500px;text-align:center">一</span><span style="display:inline-block;width:10.500px;text-align:center">致</span></div>
<div class="inp" style="left:321px;top:156px;width:109px;height:14.5px"></div>
<div class="t" style="left:429.78px;top:160.10px;color:#000;font-size:8.5px;letter-spacing:1px;-webkit-text-stroke:0.15px;transform:scale(1.0179,1.0000);transform-origin:0 0;"><span style="display:inline-block;width:10.000px;text-align:center">を</span><span style="display:inline-block;width:10.000px;text-align:center">含</span><span style="display:inline-block;width:10.000px;text-align:center">む</span></div>
<div class="inp" style="left:321px;top:176px;width:235px;height:14.5px"></div>
<div class="inp" style="left:561px;top:176px;width:59px;height:14.5px"><div class="dd"></div></div>
<div class="t" style="left:564.70px;top:179.20px;color:#000;font-size:8.5px;letter-spacing:1.5px;-webkit-text-stroke:0.15px;transform:scale(0.9585,1.0000);transform-origin:0 0;"><span style="display:inline-block;width:10.500px;text-align:center">部</span><span style="display:inline-block;width:10.500px;text-align:center">分</span><span style="display:inline-block;width:10.500px;text-align:center">一</span><span style="display:inline-block;width:10.500px;text-align:center">致</span></div>
<div class="inp" style="left:321px;top:196px;width:235px;height:14.5px"></div>
<div class="inp" style="left:561px;top:196px;width:59px;height:14.5px"><div class="dd"></div></div>
<div class="t" style="left:564.70px;top:199.20px;color:#000;font-size:8.5px;letter-spacing:1.5px;-webkit-text-stroke:0.15px;transform:scale(0.9585,1.0000);transform-origin:0 0;"><span style="display:inline-block;width:10.500px;text-align:center">部</span><span style="display:inline-block;width:10.500px;text-align:center">分</span><span style="display:inline-block;width:10.500px;text-align:center">一</span><span style="display:inline-block;width:10.500px;text-align:center">致</span></div>
<div class="inp dis" style="left:321px;top:216px;width:261px;height:14px"></div>
<div class="btn" style="left:583px;top:216.5px;width:30px;height:14px"></div>
<div class="t" style="left:588.10px;top:219.70px;color:#000;font-size:8.5px;letter-spacing:1px;-webkit-text-stroke:0.15px;transform:scale(0.9842,1.0000);transform-origin:0 0;"><span style="display:inline-block;width:10.000px;text-align:center">参</span><span style="display:inline-block;width:10.000px;text-align:center">照</span></div>
<div class="inp" style="left:321px;top:236px;width:33px;height:14.5px"></div>
<div class="t" style="left:355.40px;top:242.50px;color:#101020;font-size:8.5px;font-weight:bold;-webkit-text-stroke:0.15px;transform:scale(0.9000,1.0000);transform-origin:0 0;"><span style="display:inline-block;width:9.000px;text-align:center">点</span></div>
<div class="inp" style="left:369px;top:236px;width:59px;height:14.5px"><div class="dd"></div></div>
<div class="t" style="left:371.66px;top:239.20px;color:#000;font-size:8.5px;letter-spacing:1.5px;-webkit-text-stroke:0.15px;transform:scale(1.0368,1.0000);transform-origin:0 0;"><span style="display:inline-block;width:10.500px;text-align:center">以</span><span style="display:inline-block;width:10.500px;text-align:center">下</span></div>
<div class="inp" style="left:321px;top:256px;width:33px;height:14.5px"></div>
<div class="t" style="left:355.40px;top:262.50px;color:#101020;font-size:8.5px;font-weight:bold;-webkit-text-stroke:0.15px;transform:scale(0.9000,1.0000);transform-origin:0 0;"><span style="display:inline-block;width:9.000px;text-align:center">点</span></div>
<div class="inp" style="left:369px;top:256px;width:59px;height:14.5px"><div class="dd"></div></div>
<div class="t" style="left:371.66px;top:259.20px;color:#000;font-size:8.5px;letter-spacing:1.5px;-webkit-text-stroke:0.15px;transform:scale(1.0368,1.0000);transform-origin:0 0;"><span style="display:inline-block;width:10.500px;text-align:center">以</span><span style="display:inline-block;width:10.500px;text-align:center">下</span></div>
<div class="inp" style="left:320.5px;top:276px;width:48.5px;height:14.5px"><div class="dd"></div></div>
<div class="t" style="left:324.20px;top:279.20px;color:#000;font-size:8.5px;letter-spacing:1.5px;-webkit-text-stroke:0.15px;transform:scale(1.0158,1.0000);transform-origin:0 0;"><span style="display:inline-block;width:10.500px;text-align:center">部</span><span style="display:inline-block;width:10.500px;text-align:center">署</span></div>
<div class="inp" style="left:321px;top:296px;width:33px;height:14.5px"></div>
<div class="t" style="left:323.93px;top:297.72px;color:#000;font-size:9px;transform:scale(0.5750,1.2833);transform-origin:0 0;">1</div>
<div class="t" style="left:355.40px;top:300.70px;color:#101020;font-size:8.5px;font-weight:bold;-webkit-text-stroke:0.15px;transform:scale(0.9889,1.0000);transform-origin:0 0;"><span style="display:inline-block;width:9.000px;text-align:center">階</span><span style="display:inline-block;width:9.000px;text-align:center">層</span></div>
<div class="a" style="left:2px;top:500px;width:679px;height:17px;background:#c6c2bb"></div>
<div class="a" style="left:3px;top:499px;width:677px;height:1.5px;background:#eceae6"></div>
<div class="a" style="left:3px;top:503px;width:482px;height:13px;border-top:1px solid #7a7874;border-left:1px solid #7a7874;border-bottom:1px solid #f0eee8;border-right:1px solid #f0eee8"></div>
<div class="a" style="left:486px;top:503px;width:16.5px;height:13px;border-top:1px solid #7a7874;border-left:1px solid #7a7874;border-bottom:1px solid #f0eee8;border-right:1px solid #f0eee8"></div>
<div class="a" style="left:503px;top:503px;width:16.5px;height:13px;border-top:1px solid #7a7874;border-left:1px solid #7a7874;border-bottom:1px solid #f0eee8;border-right:1px solid #f0eee8"></div>
<div class="a" style="left:520px;top:503px;width:16.5px;height:13px;border-top:1px solid #7a7874;border-left:1px solid #7a7874;border-bottom:1px solid #f0eee8;border-right:1px solid #f0eee8"></div>
<div class="a" style="left:537px;top:503px;width:16.5px;height:13px;border-top:1px solid #7a7874;border-left:1px solid #7a7874;border-bottom:1px solid #f0eee8;border-right:1px solid #f0eee8"></div>
<div class="a" style="left:555px;top:503px;width:16.5px;height:13px;border-top:1px solid #7a7874;border-left:1px solid #7a7874;border-bottom:1px solid #f0eee8;border-right:1px solid #f0eee8"></div>
<div class="a" style="left:572px;top:503px;width:99px;height:13px;border-top:1px solid #7a7874;border-left:1px solid #7a7874;border-bottom:1px solid #f0eee8;border-right:1px solid #f0eee8"></div>
<svg class="a" style="left:3px;top:503px" width="14" height="13" viewBox="0 0 14 13">
<path d="M4.5 1 H11 L13 3 V11.5 H4.5z" fill="#e8f0f8" stroke="#404080" stroke-width="0.6"/>
<path d="M11 1 V3 H13" fill="#a0b0e0"/>
<path d="M2 6.5 A4 3.4 0 1 1 9.8 7.2 H4.5 M9.6 8.8 A4 3.4 0 0 1 2 6.5" fill="none" stroke="#1870d8" stroke-width="2.2"/>
<ellipse cx="6" cy="4.8" rx="2" ry="0.9" fill="#b0e0ff"/>
</svg>
<div class="t" style="left:18.90px;top:505.60px;color:#000;font-size:8.5px;-webkit-text-stroke:0.15px;transform:scale(0.7969,1.0000);transform-origin:0 0;"><span style="display:inline-block;width:9.000px;text-align:center">ペ</span><span style="display:inline-block;width:9.000px;text-align:center">ー</span><span style="display:inline-block;width:9.000px;text-align:center">ジ</span><span style="display:inline-block;width:9.000px;text-align:center">が</span><span style="display:inline-block;width:9.000px;text-align:center">表</span><span style="display:inline-block;width:9.000px;text-align:center">示</span><span style="display:inline-block;width:9.000px;text-align:center">さ</span><span style="display:inline-block;width:9.000px;text-align:center">れ</span><span style="display:inline-block;width:9.000px;text-align:center">ま</span><span style="display:inline-block;width:9.000px;text-align:center">し</span><span style="display:inline-block;width:9.000px;text-align:center">た</span></div>
<svg class="a" style="left:574px;top:503px" width="13" height="13" viewBox="0 0 13 13">
<circle cx="6.5" cy="6" r="5" fill="#30a0f0"/>
<path d="M2 4 Q3.5 1.5 6 2.5 Q5 5 3 5.5z M7 3 Q10 2 11 5 Q9 6 8 5z" fill="#50b030"/>
<path d="M3.5 9 H10 V12 H3.5z" fill="#e0e8f0" stroke="#3050a0" stroke-width="0.7"/>
<path d="M1 2 Q2 1 3 2" stroke="#3a8a20" stroke-width="1" fill="none"/>
</svg>
<div class="t" style="left:588.29px;top:505.50px;color:#000;font-size:8.5px;-webkit-text-stroke:0.15px;transform:scale(0.7050,1.0000);transform-origin:0 0;"><span style="display:inline-block;width:9.000px;text-align:center">イ</span><span style="display:inline-block;width:9.000px;text-align:center">ン</span><span style="display:inline-block;width:9.000px;text-align:center">ト</span><span style="display:inline-block;width:9.000px;text-align:center">ラ</span><span style="display:inline-block;width:9.000px;text-align:center">ネ</span><span style="display:inline-block;width:9.000px;text-align:center">ッ</span><span style="display:inline-block;width:9.000px;text-align:center">ト</span></div>
<svg class="a" style="left:669px;top:505px" width="12" height="12" viewBox="0 0 12 12">
<path d="M11 2 L2 11 M11 5 L5 11 M11 8 L8 11" stroke="#fff" stroke-width="1"/>
<path d="M11.8 2.8 L2.8 11.8 M11.8 5.8 L5.8 11.8 M11.8 8.8 L8.8 11.8" stroke="#808080" stroke-width="1"/>
</svg>
</body></html>
